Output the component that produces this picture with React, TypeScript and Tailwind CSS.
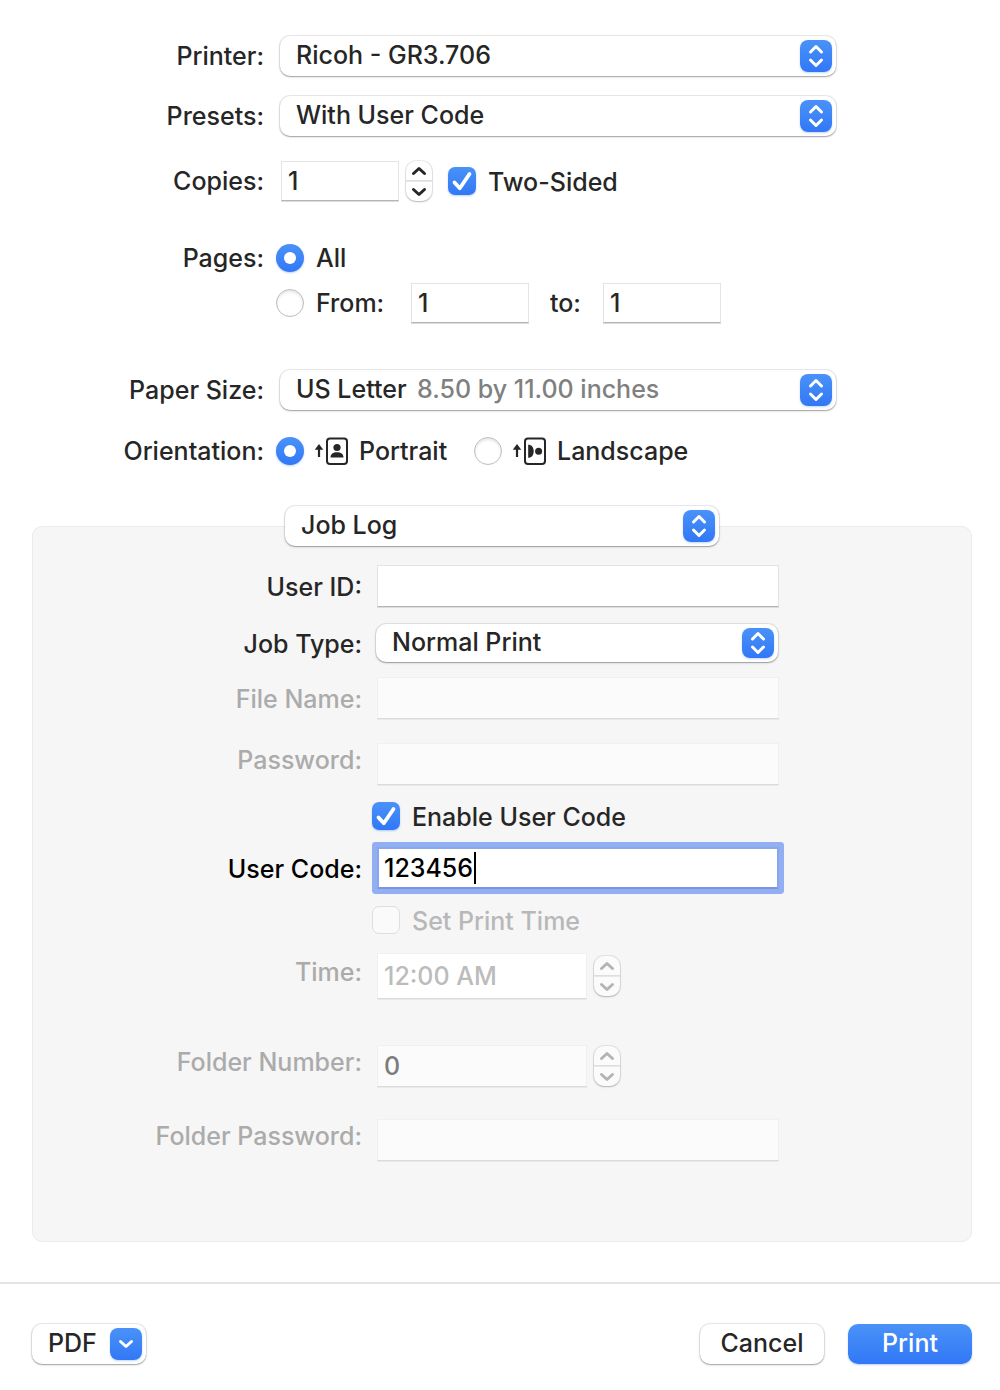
import { useId, useState, type ReactNode } from "react";

const POPUP_SHADOW =
  "shadow-[0_0_0_1px_rgba(0,0,0,0.08),0_1px_1px_rgba(0,0,0,0.2),0_1px_3px_rgba(0,0,0,0.14)]";
const BLUE = "bg-linear-to-b from-[#4a92f8] to-[#3277f6]";

function UpDownBadge() {
  return (
    <span
      aria-hidden="true"
      className={`pointer-events-none absolute inset-y-1 right-1 flex w-8 items-center justify-center rounded-[8px] shadow-[0_1px_2px_rgba(50,119,246,0.3)] ${BLUE}`}
    >
      <svg width="16" height="24" viewBox="0 0 16 24" fill="none" stroke="white" strokeWidth="3" strokeLinecap="round" strokeLinejoin="round">
        <path d="M2.5 8 8 2.5 13.5 8" />
        <path d="M2.5 16 8 21.5 13.5 16" />
      </svg>
    </span>
  );
}

function Popup({
  id,
  label,
  value,
  detail,
  className = "h-10",
}: {
  id?: string;
  label?: string;
  value: string;
  detail?: string;
  className?: string;
}) {
  return (
    <div className={`relative min-w-0 rounded-[10px] bg-white ${POPUP_SHADOW} ${className}`}>
      <select
        id={id}
        aria-label={label}
        className="block h-full w-full appearance-none rounded-[10px] bg-transparent pr-10 pb-[2px] pl-4 outline-none"
      >
        <option>{value}</option>
      </select>
      {detail && (
        <span className="pointer-events-none absolute inset-y-0 left-[137px] flex items-center pb-[2px] whitespace-nowrap text-[#808080]">
          {detail}
        </span>
      )}
      <UpDownBadge />
    </div>
  );
}

function Field({
  id,
  value = "",
  label,
  disabled,
  type = "text",
  className = "h-10 w-[118px]",
}: {
  id?: string;
  value?: string;
  label?: string;
  disabled?: boolean;
  type?: string;
  className?: string;
}) {
  const look = disabled
    ? "border-[#f0f0f0] border-b-[#dadada] shadow-[0_1px_0_#e9e9e9]"
    : "border-[#e4e4e4] border-b-[#b5b5b5] bg-white shadow-[0_1px_0_#dcdcdc]";
  return (
    <input
      id={id}
      type={type}
      aria-label={label}
      defaultValue={value}
      disabled={disabled}
      className={`block min-w-0 border px-[6px] outline-none ${look} ${className}`}
    />
  );
}

function Stepper({ name, disabled }: { name: string; disabled?: boolean }) {
  const look = disabled ? "bg-[#fbfbfb] text-[#b4b4b4]" : "bg-white text-[#262626]";
  return (
    <div
      className={`flex h-10 w-[26px] shrink-0 flex-col overflow-hidden rounded-[10px] shadow-[0_0_0_1px_rgba(0,0,0,0.07),0_1px_2px_rgba(0,0,0,0.22)] ${look}`}
    >
      <button type="button" disabled={disabled} aria-label={`Increase ${name}`} className="flex flex-1 items-center justify-center border-b border-[#dedede]">
        <svg width="16" height="10" viewBox="0 0 16 10" fill="none" stroke="currentColor" strokeWidth="3" strokeLinecap="round" strokeLinejoin="round">
          <path d="M2.5 7.5 8 2.5l5.500 5" />
        </svg>
      </button>
      <button type="button" disabled={disabled} aria-label={`Decrease ${name}`} className="flex flex-1 items-center justify-center border-t border-[#e8e8e8]">
        <svg width="16" height="10" viewBox="0 0 16 10" fill="none" stroke="currentColor" strokeWidth="3" strokeLinecap="round" strokeLinejoin="round">
          <path d="M2.500 2.500 8 7.500l5.500-5" />
        </svg>
      </button>
    </div>
  );
}

function Checkbox({ label, initial = false, disabled }: { label: string; initial?: boolean; disabled?: boolean }) {
  const [checked, setChecked] = useState(initial);
  const look = checked
    ? `${BLUE} shadow-[0_1px_2px_rgba(50,119,246,0.35)]`
    : "border border-[#dedede] bg-[#fafafa]";
  return (
    <label className={`flex h-7 items-center gap-3 whitespace-nowrap ${disabled ? "text-[#b8b8b8]" : ""}`}>
      <span className="relative size-7 shrink-0">
        <input
          type="checkbox"
          checked={checked}
          disabled={disabled}
          onChange={(e) => setChecked(e.target.checked)}
          className={`block size-7 appearance-none rounded-[7px] ${look}`}
        />
        {checked && (
          <svg aria-hidden="true" className="pointer-events-none absolute inset-0" width="28" height="28" viewBox="0 0 28 28" fill="none" stroke="white" strokeWidth="3.800" strokeLinecap="round" strokeLinejoin="round">
            <path d="M6.500 15.500 11.800 21.200 21.500 7" />
          </svg>
        )}
      </span>
      <span className="pt-px">{label}</span>
    </label>
  );
}

function Radio({ name, initial, children }: { name: string; initial?: boolean; children: ReactNode }) {
  return (
    <label className="flex h-7 items-center gap-3 whitespace-nowrap">
      <input
        type="radio"
        name={name}
        defaultChecked={initial}
        className="grid size-7 shrink-0 appearance-none place-content-center rounded-full border border-[#bdbdbd] bg-white shadow-[inset_0_2px_3px_rgba(0,0,0,0.1)] before:size-3 before:rounded-full checked:border-0 checked:bg-linear-to-b checked:from-[#4a92f8] checked:to-[#3277f6] checked:shadow-[0_1px_2px_rgba(50,119,246,0.35)] checked:before:bg-white"
      />
      {children}
    </label>
  );
}

function PageIcon({ children }: { children: ReactNode }) {
  return (
    <svg aria-hidden="true" className="-mr-px -ml-0.5" width="34" height="28" viewBox="0 0 34 28" fill="currentColor">
      <path d="M5 7 9.300 12.700H6.100V20H3.900V12.700H0.700Z" />
      <rect x="13" y="1.500" width="20" height="25.500" rx="3" fill="none" stroke="currentColor" strokeWidth="2" />
      {children}
    </svg>
  );
}

function Row({
  label,
  htmlFor,
  className = "",
  children,
}: {
  label?: string;
  htmlFor?: string;
  className?: string;
  children: ReactNode;
}) {
  return (
    <div className={`flex items-center ${className}`}>
      <div className="w-[264px] shrink-0 text-right whitespace-nowrap">
        {label && <label htmlFor={htmlFor}>{label}</label>}
      </div>
      {children}
    </div>
  );
}

function PanelRow({
  label,
  htmlFor,
  dim,
  raised,
  className = "",
  children,
}: {
  label?: string;
  htmlFor?: string;
  dim?: boolean;
  raised?: boolean;
  className?: string;
  children: ReactNode;
}) {
  return (
    <div className={`flex items-center ${className}`}>
      <div
        className={`w-[329px] shrink-0 text-right whitespace-nowrap ${dim ? "text-[#ababab]" : ""} ${raised ? "pb-2" : "pt-[2px]"}`}
      >
        {label && <label htmlFor={htmlFor}>{label}</label>}
      </div>
      {children}
    </div>
  );
}

export default function App() {
  const id = useId();
  return (
    <form
      onSubmit={(e) => e.preventDefault()}
      className="bg-white pb-[26px] font-['Inter',sans-serif] text-[25px] leading-[30px] font-[450] text-[#262626]"
    >
      <section className="pt-9 pr-[164px]">
        <Row label="Printer:" htmlFor={`${id}printer`}>
          <Popup id={`${id}printer`} value="Ricoh - GR3.706" className="ml-4 h-10 flex-1" />
        </Row>
        <Row label="Presets:" htmlFor={`${id}presets`} className="mt-5">
          <Popup id={`${id}presets`} value="With User Code" className="ml-4 h-10 flex-1" />
        </Row>
        <Row label="Copies:" htmlFor={`${id}copies`} className="mt-[25px]">
          <div className="ml-[17px] flex items-center">
            <Field id={`${id}copies`} value="1" />
            <div className="mr-[16px] ml-[7px]">
              <Stepper name="copies" />
            </div>
            <Checkbox label="Two-Sided" initial />
          </div>
        </Row>
        <Row label="Pages:" className="mt-[42px]">
          <div className="ml-3">
            <Radio name="pages" initial>
              <span>All</span>
            </Radio>
          </div>
        </Row>
        <Row className="mt-[10px]">
          <div className="ml-3 flex items-center">
            <div className="w-[135px]">
              <Radio name="pages">
                <span>From:</span>
              </Radio>
            </div>
            <Field value="1" label="From page" />
            <label htmlFor={`${id}to`} className="w-[74px] pl-[21px]">
              to:
            </label>
            <Field id={`${id}to`} value="1" />
          </div>
        </Row>
        <Row label="Paper Size:" htmlFor={`${id}paper`} className="mt-[47px]">
          <Popup id={`${id}paper`} value="US Letter" detail="8.50 by 11.00 inches" className="ml-4 h-10 flex-1" />
        </Row>
        <Row label="Orientation:" className="mt-[26px]">
          <div className="ml-3 flex items-center">
            <div className="w-[198px]">
              <Radio name="orientation" initial>
                <PageIcon>
                  <circle cx="23" cy="10.500" r="3.600" />
                  <path d="M16.500 20.500C16.500 17 19.200 15.300 23 15.300S29.500 17 29.500 20.500Z" />
                </PageIcon>
                <span>Portrait</span>
              </Radio>
            </div>
            <Radio name="orientation">
              <PageIcon>
                <circle cx="26.600" cy="14.200" r="3.500" />
                <path d="M16.200 7.700C19.700 7.700 21.700 10.400 21.700 14.200S19.700 20.700 16.200 20.700Z" />
              </PageIcon>
              <span>Landscape</span>
            </Radio>
          </div>
        </Row>
      </section>

      <section className="mt-[60px] mr-7 ml-8 rounded-[10px] border border-[#ebebeb] bg-[#f6f6f6] pb-20">
        <div className="-mt-[21px] flex justify-center">
          <Popup label="Pane" value="Job Log" className="h-10 w-[434px]" />
        </div>
        <div className="pr-[192px]">
          <PanelRow label="User ID:" htmlFor={`${id}user`} className="mt-[19px]">
            <Field id={`${id}user`} className="ml-[15px] h-[42px] flex-1" />
          </PanelRow>
          <PanelRow label="Job Type:" htmlFor={`${id}type`} className="mt-[17px]">
            <Popup id={`${id}type`} value="Normal Print" className="mr-px ml-[14px] h-[38px] flex-1" />
          </PanelRow>
          <PanelRow label="File Name:" htmlFor={`${id}file`} dim className="mt-[15px]">
            <Field id={`${id}file`} disabled className="ml-[15px] h-[42px] flex-1 bg-[#fbfbfb]" />
          </PanelRow>
          <PanelRow label="Password:" htmlFor={`${id}pass`} dim raised className="mt-6">
            <Field id={`${id}pass`} type="password" disabled className="ml-[15px] h-[42px] flex-1 bg-[#fbfbfb]" />
          </PanelRow>
          <PanelRow className="mt-[17px]">
            <div className="ml-[10px]">
              <Checkbox label="Enable User Code" initial />
            </div>
          </PanelRow>
          <PanelRow label="User Code:" htmlFor={`${id}code`} className="mt-[17px] text-black">
            <div className="relative ml-[15px] min-w-0 flex-1">
              <input
                id={`${id}code`}
                type="text"
                defaultValue="123456"
                className="block h-[42px] w-full rounded-[1px] border-2 border-[#8aa7ee] border-b-[#7b97dc] bg-white px-[5px] caret-transparent shadow-[0_0_0_5px_#93aff3] outline-none"
              />
              <span aria-hidden="true" className="absolute top-[5px] left-[97px] h-8 w-[2px] bg-black" />
            </div>
          </PanelRow>
          <PanelRow className="mt-[17px]">
            <div className="ml-[10px]">
              <Checkbox label="Set Print Time" disabled />
            </div>
          </PanelRow>
          <PanelRow label="Time:" htmlFor={`${id}time`} dim raised className="mt-[19px]">
            <Field
              id={`${id}time`}
              value="12:00 AM"
              disabled
              className="mr-[7px] ml-[15px] h-[46px] w-[210px] bg-white text-[#bcbcbc]"
            />
            <Stepper name="time" disabled />
          </PanelRow>
          <PanelRow label="Folder Number:" htmlFor={`${id}folder`} dim raised className="mt-[46px]">
            <Field
              id={`${id}folder`}
              value="0"
              disabled
              className="mr-[7px] ml-[15px] h-[42px] w-[210px] bg-[#fbfbfb] text-[#7c7c7c]"
            />
            <Stepper name="folder number" disabled />
          </PanelRow>
          <PanelRow label="Folder Password:" htmlFor={`${id}fpass`} dim raised className="mt-8">
            <Field id={`${id}fpass`} type="password" disabled className="ml-[15px] h-[42px] flex-1 bg-[#fbfbfb]" />
          </PanelRow>
        </div>
      </section>

      <footer className="mt-10 flex items-center border-t-2 border-[#e4e4e4] pt-10 pr-7 pl-8">
        <button type="button" className={`relative h-10 w-[114px] rounded-[10px] bg-white pb-[2px] pl-4 text-left ${POPUP_SHADOW}`}>
          PDF
          <span
            aria-hidden="true"
            className={`absolute inset-y-1 right-1 flex w-8 items-center justify-center rounded-[8px] shadow-[0_1px_2px_rgba(50,119,246,0.3)] ${BLUE}`}
          >
            <svg width="16" height="10" viewBox="0 0 16 10" fill="none" stroke="white" strokeWidth="3" strokeLinecap="round" strokeLinejoin="round">
              <path d="M2.500 2.500 8 7.500l5.500-5" />
            </svg>
          </span>
        </button>
        <button type="button" className={`ml-auto h-10 w-[124px] rounded-[10px] bg-white pb-[2px] ${POPUP_SHADOW}`}>
          Cancel
        </button>
        <button type="submit" className={`ml-6 h-10 w-[124px] rounded-[10px] pb-[2px] text-white shadow-[0_1px_2px_rgba(50,119,246,0.35)] ${BLUE}`}>
          Print
        </button>
      </footer>
    </form>
  );
}
